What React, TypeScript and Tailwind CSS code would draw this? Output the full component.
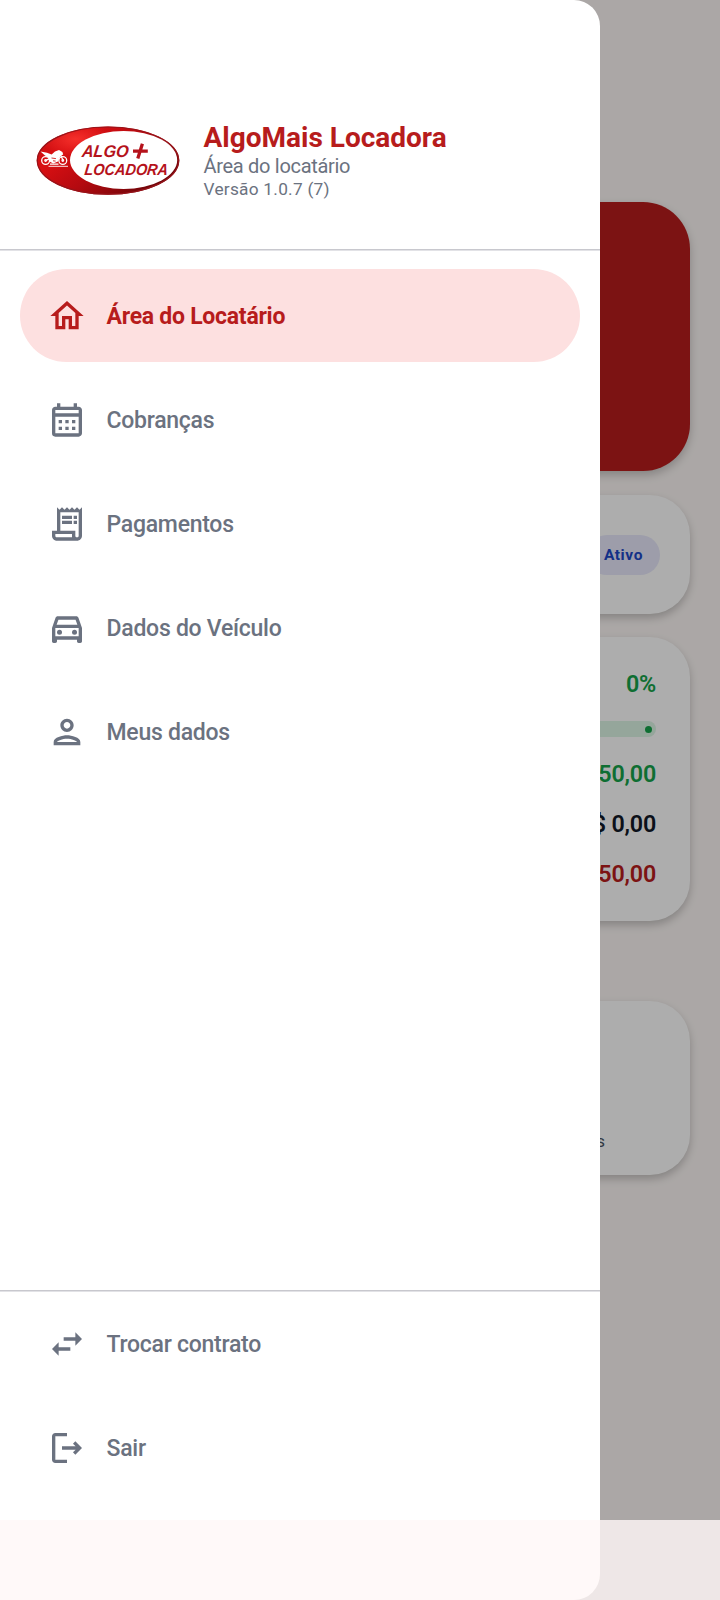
import type { ComponentType, ReactNode } from "react"
import clsx from "clsx"
import {
  MdOutlineCalendarMonth,
  MdOutlineDirectionsCar,
  MdOutlineHome,
  MdOutlineReceiptLong,
  MdSwapHoriz,
} from "react-icons/md"

type Item = { label: string; icon: ComponentType<{ className?: string }>; active?: boolean }

function PersonIcon({ className }: { className?: string }) {
  return (
    <svg viewBox="0 0 24 24" fill="currentColor" className={className}>
      <path d="M12 6c1.1 0 2 .9 2 2s-.9 2-2 2-2-.9-2-2 .9-2 2-2m0 10c2.7 0 5.8 1.29 6 2H6c.23-.72 3.31-2 6-2m0-12C9.79 4 8 5.79 8 8s1.79 4 4 4 4-1.79 4-4-1.79-4-4-4zm0 10c-2.67 0-8 1.34-8 4v2h16v-2c0-2.66-5.33-4-8-4z" />
    </svg>
  )
}

function LogoutIcon({ className }: { className?: string }) {
  return (
    <svg viewBox="0 0 24 24" fill="currentColor" className={className}>
      <path d="M17 8l-1.41 1.41L17.17 11H9v2h8.17l-1.58 1.58L17 16l4-4-4-4zM5 5h7V3H5c-1.1 0-2 .9-2 2v14c0 1.1.9 2 2 2h7v-2H5V5z" />
    </svg>
  )
}

const mainItems: Item[] = [
  { label: "Área do Locatário", icon: MdOutlineHome, active: true },
  { label: "Cobranças", icon: MdOutlineCalendarMonth },
  { label: "Pagamentos", icon: MdOutlineReceiptLong },
  { label: "Dados do Veículo", icon: MdOutlineDirectionsCar },
  { label: "Meus dados", icon: PersonIcon },
]

const footerItems: Item[] = [
  { label: "Trocar contrato", icon: MdSwapHoriz },
  { label: "Sair", icon: LogoutIcon },
]

function Logo() {
  return (
    <svg width="144" height="72" viewBox="0 0 144 72" className="shrink-0">
      <defs>
        <linearGradient id="rim" x1="0" y1="0" x2="1" y2="0.6">
          <stop offset="0" stopColor="#c90f12" />
          <stop offset="0.3" stopColor="#d80f12" />
          <stop offset="0.6" stopColor="#b40a10" />
          <stop offset="1" stopColor="#6d0509" />
        </linearGradient>
        <radialGradient id="shine" cx="0.27" cy="0.18" r="0.25">
          <stop offset="0" stopColor="#ff3a33" stopOpacity="0.75" />
          <stop offset="1" stopColor="#ff3a33" stopOpacity="0" />
        </radialGradient>
      </defs>
      <ellipse cx="72" cy="35.6" rx="71.3" ry="34.2" fill="url(#rim)" />
      <ellipse cx="72" cy="35.6" rx="70.7" ry="33.6" fill="url(#shine)" stroke="#97141a" strokeWidth="1.2" />
      <ellipse cx="87.6" cy="35" rx="53.6" ry="29" fill="#fff" />
      {/* motorcycle */}
      <g fill="none" stroke="#fff" strokeWidth="1.3">
        <circle cx="9.6" cy="35.5" r="3.9" />
        <circle cx="26.8" cy="35.5" r="3.9" />
        <circle cx="9.6" cy="35.5" r="0.8" />
        <circle cx="26.8" cy="35.5" r="0.8" />
        <path d="M12.5 41.3H32" strokeWidth="0.9" />
        <path d="M10 35.3l5-2.5M23 26.8l4 8.5M14 39.2h8.5" />
      </g>
      <path
        d="M4.5 26.6l6.5 1.2 4.6 1.8 3.4-3 4-1.6 3.4 2 .8 2.6-2.8 1.4-2.4 5.6-4.8 1.8-3.2-1.6-1-3.8-4-2.4z"
        fill="#fff"
      />
      <path d="M15.5 33l4.4 .6M17 35.8l2.6 .3" stroke="#d31a1c" strokeWidth="0.9" />
      <g fill="#b5121b" fontFamily="'Liberation Sans', Arial, sans-serif" fontWeight="700" fontStyle="italic">
        <g transform="translate(45.5 31.7) skewX(-7)">
          <text fontSize="17" textLength="46.5" lengthAdjust="spacingAndGlyphs">
            ALGO
          </text>
        </g>
        <g transform="translate(48 49.7) skewX(-7)">
          <text fontSize="16" textLength="83.5" lengthAdjust="spacingAndGlyphs">
            LOCADORA
          </text>
        </g>
      </g>
      <path d="M106.4 18.8l-4.6 14.8M97 26.2h14.8" stroke="#b5121b" strokeWidth="3.3" />
    </svg>
  )
}

function NavItem({ label, icon: Icon, active }: Item) {
  return (
    <div
      className={clsx(
        "flex h-[93px] items-center gap-5 rounded-full pl-[26.5px] text-[23px]",
        active ? "bg-[#fde0e0] font-bold text-[#b71c1c]" : "font-medium text-[#6b7280]"
      )}
    >
      <Icon className="size-10 shrink-0" />
      <span className="pt-[3.5px] tracking-[-0.26px]">{label}</span>
    </div>
  )
}

function Card({ className, children }: { className?: string; children?: ReactNode }) {
  return (
    <div className={clsx("rounded-[40px] bg-white shadow-[0_4px_8px_rgba(0,0,0,0.22)]", className)}>
      {children}
    </div>
  )
}

function Divider() {
  return <div className="h-0.5 shrink-0 border-t border-[#c8c8ce] bg-[#e2e2e6]" />
}

function Dashboard() {
  return (
    <div className="flex h-full flex-col bg-[#fcf7f5] px-[30px] pt-[202px]">
      <div className="h-[269px] shrink-0 rounded-[47px] bg-[#b71c1c] shadow-[0_4px_10px_rgba(0,0,0,0.22)]" />
      <Card className="mt-6 flex h-[119px] shrink-0 items-center justify-end pr-[30px]">
        <span className="flex h-10 items-center rounded-full bg-[#e7e8fb] pt-0.5 pr-[17px] pl-[17px] text-[15.5px] font-bold tracking-[0.6px] text-[#1d47c8]">
          Ativo
        </span>
      </Card>
      <Card className="mt-[23px] flex h-[284px] shrink-0 flex-col items-end pt-[30px] pr-[34px] text-[23.3px] font-semibold tracking-[-0.2px]">
        <span className="leading-[35px] text-[#16a34a]">0%</span>
        <div className="mt-[19px] flex h-4 w-[400px] items-center justify-end rounded-full bg-[#dcf5e5] pr-[4.5px]">
          <div className="size-[7px] rounded-full bg-[#16a34a]" />
        </div>
        <span className="mt-3 leading-[50px] text-[#16a34a]">R$ 50,00</span>
        <span className="leading-[50px] text-[#111827]">R$ 0,00</span>
        <span className="leading-[50px] text-[#b71c1c]">R$ 50,00</span>
      </Card>
      <Card className="mt-20 flex h-[174px] shrink-0 items-end justify-end pr-[85px] pb-[23px]">
        <span className="text-[17px] leading-[22px] text-[#4b5563]">Parcelas</span>
      </Card>
    </div>
  )
}

function Drawer() {
  return (
    <div className="absolute inset-y-0 left-0 flex w-[600px] flex-col rounded-r-[26px] bg-white">
      <div className="flex h-[249px] items-start gap-6 pt-[121px] pl-[35.5px]">
        <div className="pt-1">
          <Logo />
        </div>
        <div className="flex flex-col">
          <span className="text-[28px] leading-[33px] font-bold text-[#b71c1c]">AlgoMais Locadora</span>
          <span className="text-[20px] leading-[24px] tracking-[-0.3px] text-[#6b7280]">Área do locatário</span>
          <span className="text-[17.3px] leading-[22px] tracking-[0.25px] text-[#6b7280]">Versão 1.0.7 (7)</span>
        </div>
      </div>
      <Divider />
      <div className="flex flex-1 flex-col gap-[11px] px-5 pt-[18px]">
        {mainItems.map((item) => (
          <NavItem key={item.label} {...item} />
        ))}
      </div>
      <Divider />
      <div className="flex h-[308px] flex-col gap-[11px] px-5 pt-[5px]">
        {footerItems.map((item) => (
          <NavItem key={item.label} {...item} />
        ))}
      </div>
    </div>
  )
}

export default function App() {
  return (
    <div className="relative h-[1600px] w-[720px] overflow-hidden font-[Roboto,sans-serif]">
      <Dashboard />
      <div className="absolute inset-0 bg-black/32" />
      <Drawer />
      {/* system navigation bar */}
      <div className="absolute inset-x-0 bottom-0 h-20 bg-[#fff8f7]/80" />
    </div>
  )
}
